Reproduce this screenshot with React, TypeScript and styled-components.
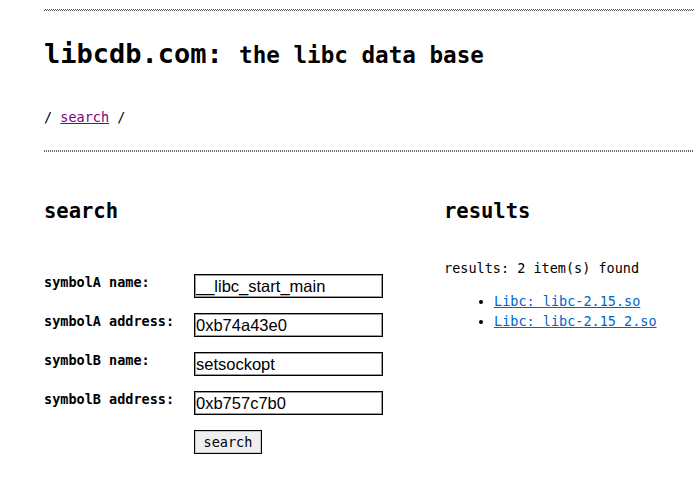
import React from "react";
import styled, { createGlobalStyle } from "styled-components";

const Global = createGlobalStyle`
  html, body { margin: 0; padding: 0; background: #fff; }
  body { font-family: "DejaVu Sans Mono", "Liberation Mono", monospace; color: #000; }
`;

const Page = styled.div`
  padding-left: 44px;
  padding-top: 9px;
  padding-bottom: 20px;
`;

const TopRule = styled.div`
  height: 2px;
  background-image: conic-gradient(#555 25%, transparent 0 50%, #555 0 75%, transparent 0);
  background-size: 2px 2px;
`;

const BottomRule = styled.div`
  height: 2px;
  margin-top: 24px;
  background-image: repeating-linear-gradient(90deg, #666 0 1px, transparent 1px 2px);
`;

const Title = styled.h1`
  margin: 27px 0 0;
  font-size: 27px;
  line-height: 32px;
  font-weight: bold;
`;

const Sub = styled.span`
  font-size: 22.6px;
`;

const Crumbs = styled.div`
  margin-top: 37px;
  font-size: 13.5px;
  line-height: 18px;
`;

const CrumbLink = styled.a`
  color: #800080;
  text-decoration: underline;
`;

const Columns = styled.div`
  display: grid;
  grid-template-columns: 400px 1fr;
  margin-top: 47px;
`;

const Heading = styled.h2`
  margin: 0;
  font-size: 20.5px;
  line-height: 24px;
  font-weight: bold;
`;

const Form = styled.div`
  margin-top: 51px;
  display: grid;
  grid-template-columns: 150px 189px;
  row-gap: 15px;
`;

const Label = styled.label`
  font-size: 13.5px;
  line-height: 14px;
  font-weight: bold;
  align-self: start;
  padding-top: 1px;
`;

const Input = styled.input`
  box-sizing: border-box;
  width: 189px;
  height: 24px;
  margin: 0;
  padding: 0 1px;
  border: 1px solid #000;
  box-shadow: inset 0 0 0 1px #9a9a9a;
  font-family: "Liberation Sans", Arial, sans-serif;
  font-size: 16.5px;
  color: #000;
  background: #fff;
  outline: none;
`;

const Button = styled.button`
  grid-column: 2;
  justify-self: start;
  box-sizing: border-box;
  width: 68px;
  height: 24px;
  margin: 0;
  padding: 0;
  border: 1px solid #000;
  box-shadow: inset 0 0 0 1px #c8c8c8;
  background: #efefef;
  font-family: "DejaVu Sans Mono", "Liberation Mono", monospace;
  font-size: 13.5px;
  color: #000;
`;

const ResultText = styled.div`
  margin-top: 36px;
  font-size: 13.5px;
  line-height: 18px;
`;

const List = styled.ul`
  margin: 14px 0 0;
  padding-left: 50px;
  font-size: 13.5px;
  line-height: 20px;
`;

const ResultLink = styled.a`
  color: #0066cc;
  text-decoration: underline;
`;

const fields = [
  ["symbolA name:", "__libc_start_main"],
  ["symbolA address:", "0xb74a43e0"],
  ["symbolB name:", "setsockopt"],
  ["symbolB address:", "0xb757c7b0"],
];

export default function App() {
  return (
    <Page>
      <Global />
      <TopRule />
      <Title>
        libcdb.com: <Sub>the libc data base</Sub>
      </Title>
      <Crumbs>
        / <CrumbLink href="#">search</CrumbLink> /
      </Crumbs>
      <BottomRule />
      <Columns>
        <div>
          <Heading>search</Heading>
          <Form>
            {fields.map(([l, v]) => (
              <React.Fragment key={l}>
                <Label>{l}</Label>
                <Input defaultValue={v} />
              </React.Fragment>
            ))}
            <Button>search</Button>
          </Form>
        </div>
        <div>
          <Heading>results</Heading>
          <ResultText>results: 2 item(s) found</ResultText>
          <List>
            <li><ResultLink href="#">Libc: libc-2.15.so</ResultLink></li>
            <li><ResultLink href="#">Libc: libc-2.15 2.so</ResultLink></li>
          </List>
        </div>
      </Columns>
    </Page>
  );
}
